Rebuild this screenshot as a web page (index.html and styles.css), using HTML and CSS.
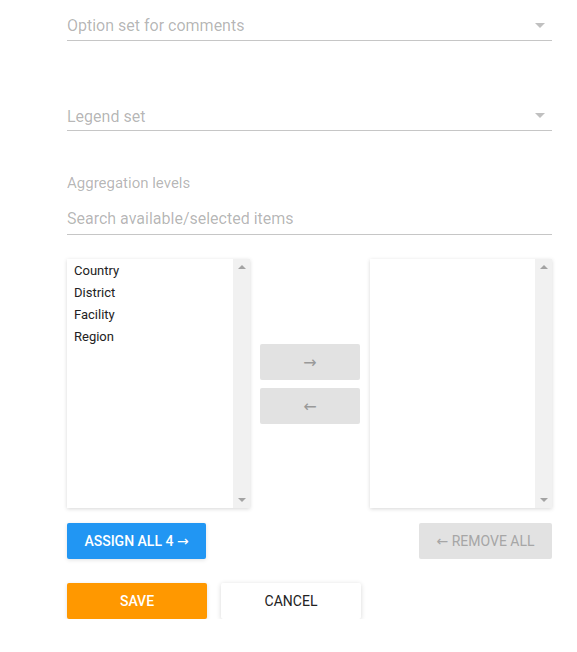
FILE: index.html
```html
<!DOCTYPE html>
<html>
<head>
<meta charset="utf-8">
<link rel="stylesheet" href="styles.css">
</head>
<body>
<div class="form">
  <div class="select first">
    <span class="hint">Option set for comments</span>
    <span class="caret"></span>
  </div>
  <div class="select second">
    <span class="hint">Legend set</span>
    <span class="caret"></span>
  </div>
  <div class="label">Aggregation levels</div>
  <div class="search"><span class="hint">Search available/selected items</span></div>

  <div class="lists">
    <div class="listbox">
      <ul class="items">
        <li>Country</li>
        <li>District</li>
        <li>Facility</li>
        <li>Region</li>
      </ul>
      <div class="scrollbar"><span class="up"></span><span class="down"></span></div>
    </div>
    <div class="mid">
      <button class="btn grey small"><span class="arr">&#8594;</span></button>
      <button class="btn grey small"><span class="arr">&#8592;</span></button>
    </div>
    <div class="listbox">
      <div class="items"></div>
      <div class="scrollbar"><span class="up"></span><span class="down"></span></div>
    </div>
  </div>

  <div class="row between">
    <button class="btn blue assign">ASSIGN ALL 4 <span class="arr">&#8594;</span></button>
    <button class="btn grey remove"><span class="arr">&#8592;</span> REMOVE ALL</button>
  </div>

  <div class="row actions">
    <button class="btn orange save">SAVE</button>
    <button class="btn white cancel">CANCEL</button>
  </div>
</div>
</body>
</html>
```
FILE: styles.css
```css
* { box-sizing: border-box; }
html, body { margin: 0; padding: 0; background: #fff; }
body { font-family: Roboto, "Noto Sans", Arial, sans-serif; }

.form {
  width: 485px;
  margin-left: 67px;
}

.select {
  position: relative;
  height: 41px;
  padding-top: 16px;
  line-height: 20px;
  font-size: 16px;
  border-bottom: 1px solid #c6c6c6;
}
.second { margin-top: 49px; }
.second .hint { position: relative; top: 1px; }
.hint { color: rgba(0,0,0,0.3); }

.caret {
  position: absolute;
  right: 7px;
  top: 23px;
  width: 0; height: 0;
  border-left: 5px solid transparent;
  border-right: 5px solid transparent;
  border-top: 5px solid #c0c0c0;
}

.label {
  margin-top: 43px;
  font-size: 15px;
  line-height: 18px;
  color: rgba(0,0,0,0.3);
}
.search {
  margin-top: 17px;
  height: 26px;
  line-height: 20px;
  font-size: 16px;
  border-bottom: 1px solid #c6c6c6;
}

.lists {
  margin-top: 24px;
  display: grid;
  grid-template-columns: 183px 100px 182px;
  column-gap: 10px;
  height: 249px;
}

.listbox {
  display: flex;
  background: #fff;
  box-shadow: 0 1px 4px rgba(0,0,0,0.16);
}
.items {
  flex: 1;
  list-style: none;
  margin: 0;
  padding: 1px 0 0 7px;
  font-size: 13px;
  color: #222;
}
.items li { line-height: 22px; }

.scrollbar {
  width: 17px;
  background: #f1f1f1;
  position: relative;
}
.scrollbar .up, .scrollbar .down {
  position: absolute;
  left: 5px;
  width: 0; height: 0;
  border-left: 4px solid transparent;
  border-right: 4px solid transparent;
}
.scrollbar .up { top: 6px; border-bottom: 4px solid #a3a3a3; }
.scrollbar .down { bottom: 6px; border-top: 4px solid #a3a3a3; }

.mid {
  display: flex;
  flex-direction: column;
  gap: 8px;
  padding-top: 85px;
}

.btn {
  border: none;
  border-radius: 2px;
  height: 36px;
  font-family: Roboto, "Noto Sans", Arial, sans-serif;
  font-size: 14px;
  font-weight: 500;
  padding: 0;
  cursor: pointer;
}
.arr { font-family: "DejaVu Sans", sans-serif; font-weight: 400; }
.grey { background: #e2e2e2; color: #a6a6a6; }
.small { width: 100px; font-size: 16px; font-weight: 400; color: #999; }
.blue { background: #2196f3; color: #fff; box-shadow: 0 1px 4px rgba(0,0,0,0.12); }
.orange { background: #ff9800; color: #fff; box-shadow: 0 1px 4px rgba(0,0,0,0.12); }
.white { background: #fff; color: #222; box-shadow: 0 1px 5px rgba(0,0,0,0.16); font-weight: 400; }

.row { display: flex; }
.between { justify-content: space-between; margin-top: 15px; }
.assign { width: 139px; }
.remove { width: 133px; font-weight: 400; }
.actions { margin-top: 24px; gap: 14px; }
.save { width: 140px; }
.cancel { width: 140px; }
```
